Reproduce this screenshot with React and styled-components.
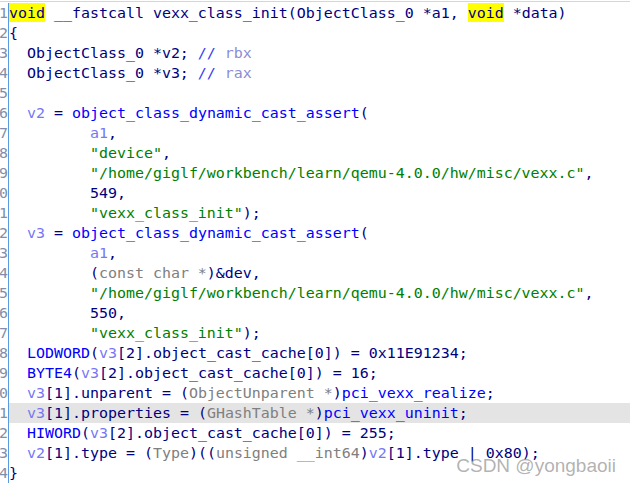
import React from "react";
import styled, { createGlobalStyle } from "styled-components";

const Global = createGlobalStyle`
  html, body { margin: 0; padding: 0; background: #ffffff; }
  body { width: 630px; height: 487px; overflow: hidden; }
`;

const Page = styled.div`
  position: relative;
  width: 630px;
  height: 487px;
  padding-top: 1px;
  box-sizing: border-box;
  background: #ffffff;
  overflow: hidden;
`;

const Editor = styled.div`
  border-top: 1px solid #d6d6d6;
  padding-top: 1px;
  display: flex;
  flex-direction: column;
  font-family: "DejaVu Sans Mono", "Liberation Mono", monospace;
  font-size: 14.95px;
  line-height: 20px;
`;

const Row = styled.div`
  display: flex;
  height: 20px;
`;

const LineNo = styled.div`
  width: 8px;
  flex: none;
  display: flex;
  justify-content: flex-end;
  overflow: hidden;
  border-right: 1px solid #5a9be0;
  color: #7f8eaa;
  white-space: nowrap;
`;

const Code = styled.div`
  flex: 1;
  white-space: pre;
  color: #000080;
  background: ${(p) => (p.$current ? "#e4e4e4" : "transparent")};
`;

const colors = {
  n: "#000080",
  f: "#0000ff",
  v: "#7777f5",
  s: "#008000",
  t: "#808080",
  c: "#8c8cd6",
  cs: "#3a3aee",
};

const Tok = styled.span`
  color: ${(p) => colors[p.$k] || "#000080"};
`;

const Hl = styled.span`
  display: inline-block;
  vertical-align: top;
  height: 19px;
  background: #ffff00;
  color: #000080;
`;

const Watermark = styled.div`
  position: absolute;
  right: 14px;
  top: 455px;
  font-family: "Liberation Sans", Arial, sans-serif;
  font-size: 19px;
  color: rgba(130, 130, 130, 0.62);
  white-space: nowrap;
  pointer-events: none;
`;

const lines = [
  [["h", "void"], ["n", " __fastcall vexx_class_init(ObjectClass_0 *a1, "], ["h", "void"], ["n", " *data)"]],
  [["n", "{"]],
  [["n", "  ObjectClass_0 *v2; "], ["cs", "//"], ["c", " rbx"]],
  [["n", "  ObjectClass_0 *v3; "], ["cs", "//"], ["c", " rax"]],
  [],
  [["n", "  "], ["v", "v2"], ["n", " = "], ["f", "object_class_dynamic_cast_assert"], ["n", "("]],
  [["n", "         "], ["v", "a1"], ["n", ","]],
  [["n", "         "], ["s", "\"device\""], ["n", ","]],
  [["n", "         "], ["s", "\"/home/giglf/workbench/learn/qemu-4.0.0/hw/misc/vexx.c\""], ["n", ","]],
  [["n", "         549,"]],
  [["n", "         "], ["s", "\"vexx_class_init\""], ["n", ");"]],
  [["n", "  "], ["v", "v3"], ["n", " = "], ["f", "object_class_dynamic_cast_assert"], ["n", "("]],
  [["n", "         "], ["v", "a1"], ["n", ","]],
  [["n", "         ("], ["t", "const char *"], ["n", ")&dev,"]],
  [["n", "         "], ["s", "\"/home/giglf/workbench/learn/qemu-4.0.0/hw/misc/vexx.c\""], ["n", ","]],
  [["n", "         550,"]],
  [["n", "         "], ["s", "\"vexx_class_init\""], ["n", ");"]],
  [["n", "  "], ["f", "LODWORD"], ["n", "("], ["v", "v3"], ["n", "[2].object_cast_cache[0]) = 0x11E91234;"]],
  [["n", "  "], ["f", "BYTE4"], ["n", "("], ["v", "v3"], ["n", "[2].object_cast_cache[0]) = 16;"]],
  [["n", "  "], ["v", "v3"], ["n", "[1].unparent = ("], ["t", "ObjectUnparent *"], ["n", ")"], ["f", "pci_vexx_realize"], ["n", ";"]],
  [["n", "  "], ["v", "v3"], ["n", "[1].properties = ("], ["t", "GHashTable *"], ["n", ")"], ["f", "pci_vexx_uninit"], ["n", ";"]],
  [["n", "  "], ["f", "HIWORD"], ["n", "("], ["v", "v3"], ["n", "[2].object_cast_cache[0]) = 255;"]],
  [["n", "  "], ["v", "v2"], ["n", "[1].type = ("], ["t", "Type"], ["n", ")(("], ["t", "unsigned __int64"], ["n", ")"], ["v", "v2"], ["n", "[1].type | 0x80);"]],
  [["n", "}"]],
];

export default function App() {
  return (
    <Page>
      <Global />
      <Editor>
        {lines.map((segs, i) => (
          <Row key={i}>
            <LineNo>
              <span>{i + 1}</span>
            </LineNo>
            <Code $current={i === 20}>
              {segs.length === 0
                ? " "
                : segs.map(([k, t], j) =>
                    k === "h" ? (
                      <Hl key={j}>{t}</Hl>
                    ) : (
                      <Tok key={j} $k={k}>
                        {t}
                      </Tok>
                    )
                  )}
            </Code>
          </Row>
        ))}
      </Editor>
      <Watermark>CSDN @yongbaoii</Watermark>
    </Page>
  );
}
